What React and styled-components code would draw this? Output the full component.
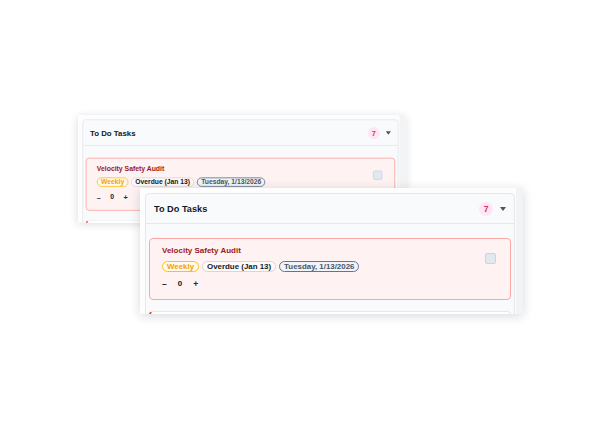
import styled, { createGlobalStyle } from 'styled-components';

const GlobalStyle = createGlobalStyle`
  html, body {
    margin: 0;
    padding: 0;
    background: #ffffff;
  }
  body {
    font-family: "Liberation Sans", Arial, sans-serif;
  }
  * {
    box-sizing: border-box;
  }
`;

const Canvas = styled.div`
  position: relative;
  width: 600px;
  height: 445px;
  overflow: hidden;
  background: #ffffff;
`;

// one snapshot of the widget, placed on the canvas
const Window = styled.div`
  position: absolute;
  left: ${(p) => p.$x}px;
  top: ${(p) => p.$y}px;
  width: 383px;
  height: 126px;
  display: flex;
  background: #fdfdfe;
  box-shadow: 0 2px 10px rgba(15, 23, 42, 0.16);
  overflow: hidden;
  transform: scale(${(p) => p.$scale});
  transform-origin: top left;
`;

const Viewport = styled.div`
  flex: 1;
  padding: 5px 1px 0 5px;
  overflow: hidden;
`;

const ScrollTrack = styled.div`
  width: 7px;
  background: #f2f3f5;
`;

const Card = styled.section`
  border: 1px solid #e5e7eb;
  border-radius: 4px;
  background: #f9fafb;
`;

const Header = styled.header`
  height: 30px;
  display: flex;
  align-items: center;
  padding: 0 8px 0 8px;
  border-bottom: 1px solid #e5e7eb;
`;

const Title = styled.h2`
  margin: 0;
  flex: 1;
  font-size: 9.2px;
  font-weight: 700;
  color: #111827;
`;

const CountBadge = styled.span`
  width: 14px;
  height: 14px;
  border-radius: 50%;
  background: #fce7f3;
  color: #db2777;
  font-size: 8.5px;
  font-weight: 700;
  display: flex;
  align-items: center;
  justify-content: center;
`;

const Caret = styled.span`
  margin-left: 7px;
  width: 0;
  height: 0;
  border-left: 3px solid transparent;
  border-right: 3px solid transparent;
  border-top: 4px solid #4b5563;
`;

const List = styled.div`
  display: flex;
  flex-direction: column;
  gap: 11px;
  padding: 14px 3px;
`;

const Task = styled.div`
  display: flex;
  padding: 7px 14px 10px 12px;
  border: 1px solid #fca5a5;
  border-radius: 4px;
  background: #fef2f2;
`;

const TaskBody = styled.div`
  flex: 1;
  display: flex;
  flex-direction: column;
`;

const TaskName = styled.div`
  font-size: 8px;
  line-height: 10px;
  font-weight: 700;
  color: #991b1b;
`;

const Tags = styled.div`
  display: flex;
  gap: 3px;
  margin-top: 5px;
`;

const tagColors = {
  freq: { bg: '#fffbeb', border: '#fbbf24', color: '#f59e0b' },
  due: { bg: '#fffafa', border: '#dfd2d2', color: '#111827' },
  date: { bg: '#f1f5f9', border: '#64748b', color: '#475569' },
};

const Tag = styled.span`
  display: inline-flex;
  align-items: center;
  height: 11px;
  padding: 0 4px;
  border-radius: 999px;
  border: 1px solid ${(p) => tagColors[p.$kind].border};
  background: ${(p) => tagColors[p.$kind].bg};
  color: ${(p) => tagColors[p.$kind].color};
  font-size: 7.9px;
  font-weight: 700;
  white-space: nowrap;
`;

const Counter = styled.div`
  display: flex;
  align-items: center;
  gap: 11px;
  margin-top: 7px;
  height: 10px;
`;

const StepButton = styled.button`
  padding: 0;
  border: none;
  background: none;
  font-family: inherit;
  font-size: 8.5px;
  font-weight: 700;
  line-height: 10px;
  color: #1f2937;
  cursor: pointer;
`;

const Count = styled.span`
  font-size: 8px;
  font-weight: 700;
  line-height: 10px;
  color: #111827;
`;

const Check = styled.input`
  appearance: none;
  margin: 7px 0 0 auto;
  width: 11px;
  height: 11px;
  border: 1px solid #cbd5e1;
  border-radius: 2px;
  background: #e2e8f0;
`;

const NextTask = styled.div`
  height: 60px;
  border: 1px solid #e5e7eb;
  border-left: 2px solid #ef4444;
  border-radius: 4px;
  background: #ffffff;
`;

const TaskWidget = ({ x, y, scale }) => (
  <Window $x={x} $y={y} $scale={scale}>
    <Viewport>
      <Card>
        <Header>
          <Title>To Do Tasks</Title>
          <CountBadge>7</CountBadge>
          <Caret />
        </Header>
        <List>
          <Task>
            <TaskBody>
              <TaskName>Velocity Safety Audit</TaskName>
              <Tags>
                <Tag $kind="freq">Weekly</Tag>
                <Tag $kind="due">Overdue (Jan 13)</Tag>
                <Tag $kind="date">Tuesday, 1/13/2026</Tag>
              </Tags>
              <Counter>
                <StepButton>–</StepButton>
                <Count>0</Count>
                <StepButton>+</StepButton>
              </Counter>
            </TaskBody>
            <Check type="checkbox" />
          </Task>
          <NextTask />
        </List>
      </Card>
    </Viewport>
    <ScrollTrack />
  </Window>
);

export default function App() {
  return (
    <>
      <GlobalStyle />
      <Canvas>
        <TaskWidget x={78} y={115} scale={0.855} />
        <TaskWidget x={140} y={188} scale={1} />
      </Canvas>
    </>
  );
}
